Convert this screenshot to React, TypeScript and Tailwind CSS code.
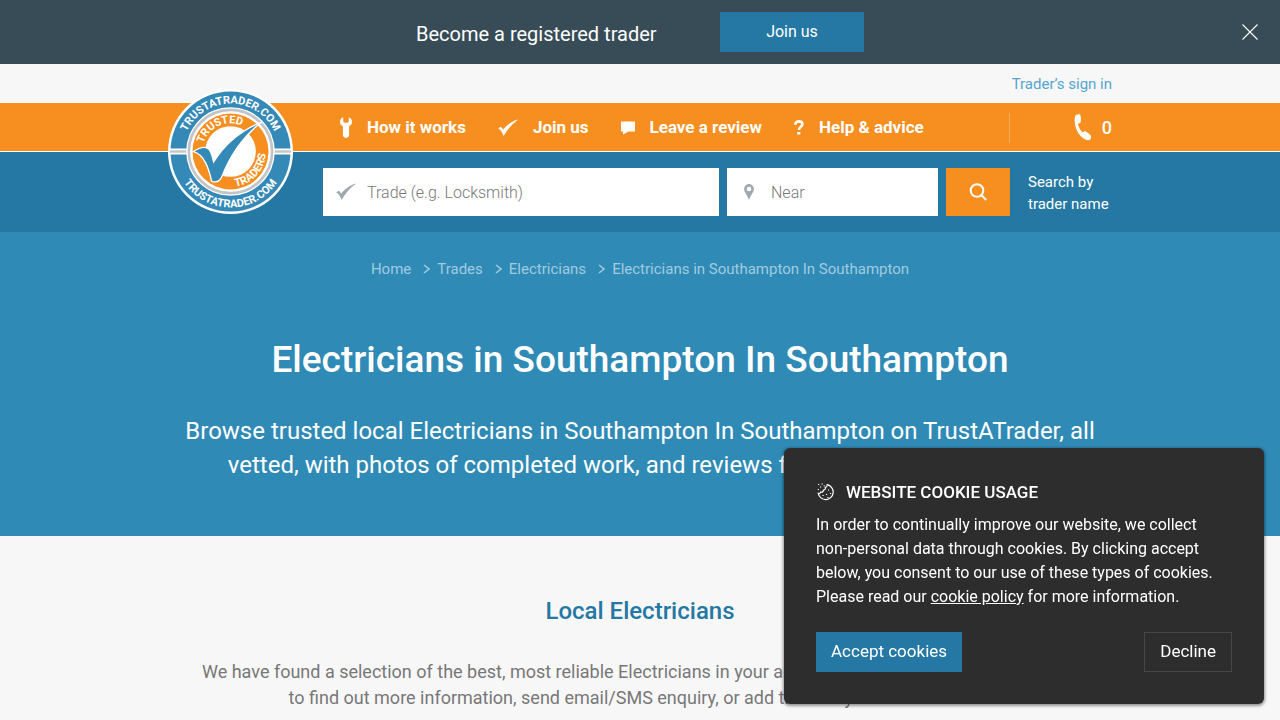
const NAV = [
  { label: "How it works", icon: <WrenchIcon /> },
  { label: "Join us", icon: <TickIcon className="w-5 h-5 mr-[15px]" /> },
  { label: "Leave a review", icon: <SpeechIcon /> },
  { label: "Help & advice", icon: <QuestionIcon /> },
];

const CRUMBS = ["Home", "Trades", "Electricians"];

function WrenchIcon() {
  return (
    <svg viewBox="0 0 12 21" className="w-3 h-[21px] mr-[15px]" fill="currentColor">
      <path d="M3.200.3C1.200 1.200 0 2.800 0 4.900c0 2 1.100 3.500 2.900 4.400v8.800c0 1.700 1.300 2.800 3.100 2.800s3.100-1.100 3.100-2.800V9.300C10.900 8.400 12 6.900 12 4.900 12 2.800 10.800 1.200 8.800.3v4.100L7.500 5.800h-3L3.200 4.400z" />
    </svg>
  );
}

function TickIcon({ className }: { className: string }) {
  return (
    <svg viewBox="0 0 20 20" className={className} fill="currentColor">
      <path d="M0 10.600l2.600-1.900c.7.300 1.600 1.200 2.500 2.700C8.800 7.200 13.700 3.500 19.500 1.600L19.700 2C14.500 5.700 9.400 11.200 5.600 18 4.300 15 2.500 11 0 10.600z" />
    </svg>
  );
}

function SpeechIcon() {
  return (
    <svg viewBox="0 0 14 14" className="w-[14px] h-[14px] mr-[15px]" fill="currentColor">
      <path d="M0 .5h14v10H7.500L2 13.500v-3H0z" />
    </svg>
  );
}

function QuestionIcon() {
  return (
    <svg
      viewBox="0 0 10 15"
      className="w-[10px] h-[15px] mr-[15px]"
      fill="none"
      stroke="currentColor"
      strokeWidth="2.600"
    >
      <path d="M1.300 4.700C1.300 2.500 2.700 1.400 4.900 1.400s3.500 1.100 3.500 2.800c0 2.600-3.500 2.800-3.500 5.900" />
      <path d="M3.300 13.300h3" />
    </svg>
  );
}

function PinIcon() {
  return (
    <svg viewBox="0 0 10 16" className="w-[10px] h-4" fill="#a0a9b0" fillRule="evenodd">
      <path d="M5 0a4.900 4.900 0 0 1 4.900 4.900C9.900 8.400 6.800 10.500 5 16 3.200 10.500.1 8.400.1 4.900A4.900 4.900 0 0 1 5 0zm0 2.700a2.300 2.300 0 1 0 0 4.600 2.300 2.300 0 0 0 0-4.600z" />
    </svg>
  );
}

function CookieIcon() {
  return (
    <svg viewBox="0 0 18 18" className="w-[18px] h-[18px]" fill="none" stroke="currentColor">
      <path
        d="M11.200 1.700a7.500 7.500 0 1 1-8.900 8.600c1 .3 2.200-.2 2.500-1.200 1.500.4 2.700-.6 2.600-1.900 1.600-.2 2.300-1.500 1.800-2.700 1.200-.4 2-1.600 2-2.800z"
        strokeWidth="1.200"
      />
      <path
        d="M2 1.500h1.200M5.500 1h1.200M4 4h1.200M1.800 6.500H3M7.700 2.800h1M11.900 7h1.200M14 10.500h1.200M10 11.500h1.200M6.500 12.500h1.200M11.300 14.500h1.200"
        strokeWidth="1.200"
      />
    </svg>
  );
}

function Chevron() {
  return (
    <svg viewBox="0 0 7 10" className="w-[7px] h-[10px] ml-3 mr-[7px]" fill="none" stroke="currentColor" strokeWidth="1.500">
      <path d="M1 1l5 4-5 4" />
    </svg>
  );
}

function Logo() {
  return (
    <svg viewBox="24 14 375 375" className="w-[125px] h-[125px]" role="img" aria-label="TrustATrader">
      <defs>
        <path id="ring-top" d="M67.500 201.500a144 144 0 0 1 288 0" />
        <path id="ring-bottom" d="M43.500 201.500a168 168 0 0 0 336 0" />
        <path id="inner-top" d="M127 206A84.600 84.600 0 0 1 269.200 139.600" />
        <path id="inner-bottom" d="M164.900 297.700A107 107 0 0 0 303.500 147.800" />
      </defs>
      <circle cx="211.500" cy="201.500" r="187.500" fill="#fff" />
      <circle cx="211.500" cy="201.500" r="180" fill="#3489b7" />
      <path d="M24 201.500h375" stroke="#fff" strokeWidth="18" />
      <path d="M30 201.500h363" stroke="#c4c7ca" strokeWidth="7" />
      <circle cx="211.500" cy="201.500" r="133" fill="#fff" />
      <circle cx="211.500" cy="201.500" r="125" fill="none" stroke="#c1c4c8" strokeWidth="8" />
      <circle cx="211.500" cy="201.500" r="114" fill="#f68e20" />
      <circle cx="211.500" cy="201.500" r="76" fill="#fff" />
      <g fill="#fff" className="font-[Roboto,sans-serif] font-bold" textAnchor="middle">
        <text fontSize="33">
          <textPath href="#ring-top" startOffset="50%">TRUSTATRADER.COM</textPath>
        </text>
        <text fontSize="33">
          <textPath href="#ring-bottom" startOffset="50%">TRUSTATRADER.COM</textPath>
        </text>
        <text fontSize="33">
          <textPath href="#inner-top" startOffset="50%">TRUSTED</textPath>
        </text>
        <text fontSize="33">
          <textPath href="#inner-bottom" startOffset="50%">TRADERS</textPath>
        </text>
      </g>
      <path
        d="M100 202c18-12 37-17 47-7 8 9 10 24 14 38 33-54 81-94 144-120-57 44-93 97-119 163-6 16-18 19-31 15-8-35-21-81-55-89z"
        fill="#3489b7"
        stroke="#fff"
        strokeWidth="4"
      />
    </svg>
  );
}

function JoinBar() {
  return (
    <div className="relative h-16 bg-[#374c57] flex items-center justify-center gap-[60px] text-white">
      <p className="w-[244px] text-xl pt-1 whitespace-nowrap">Become a registered trader</p>
      <button className="w-36 h-10 bg-[#2478a3] text-base">Join us</button>
      <button aria-label="Close" className="absolute right-[22px] top-6">
        <svg viewBox="0 0 16 16" className="w-4 h-4" stroke="currentColor" strokeWidth="1.100">
          <path d="M.5.500l15 15M15.500.500l-15 15" />
        </svg>
      </button>
    </div>
  );
}

function Header() {
  return (
    <header className="relative">
      <div className="h-[39px] bg-[#f7f7f7] border-b border-white">
        <div className="max-w-[944px] mx-auto h-full pt-0.5 flex items-center justify-end">
          <a href="#signin" className="text-[15px] text-[#56a5cf]">
            Trader’s sign in
          </a>
        </div>
      </div>
      <div className="h-[49px] bg-[#f68e20] border-b border-white text-white">
        <div className="max-w-[944px] mx-auto h-full pl-[172px] pt-px flex items-center">
          <nav className="flex items-center gap-8 font-bold text-[17px]">
            {NAV.map((item) => (
              <a key={item.label} href="#nav" className="flex items-center whitespace-nowrap">
                {item.icon}
                {item.label}
              </a>
            ))}
          </nav>
          <a
            href="#shortlist"
            aria-label="Shortlisted traders: 0"
            className="ml-auto w-[103px] h-[30px] border-l border-[#f9ab59] flex items-center justify-end gap-[10px] text-lg font-medium"
          >
            <svg viewBox="0 0 18 27" className="w-[18px] h-[27px]" fill="currentColor">
              <path d="M2.300.7C3.500.1 5.300 0 6.200.7c.7 1.600.9 4.900.5 7.300-.3 1-1.600 1.500-2.800 1.700.6 3.400 2.400 6.500 4.900 8.700.8-1 1.900-1.400 2.900-1 2.400 1.200 4.600 3 5.500 4.600.2 1.600-.6 3.400-1.900 4.100-2.200.7-6-1.300-8.500-3.800C3 18.200.7 12.700.6 6.500.6 3.900.8 1.600 2.300.7z" />
            </svg>
            <span>0</span>
          </a>
        </div>
      </div>
      <div className="h-20 bg-[#2478a3]">
        <form className="max-w-[944px] mx-auto h-full pl-[155px] flex items-center gap-2">
          <label className="flex-1 h-12 bg-white flex items-center pl-[13px] text-[#a0a9b0]">
            <TickIcon className="w-5 h-5" />
            <input
              aria-label="Trade"
              placeholder="Trade (e.g. Locksmith)"
              className="min-w-0 flex-1 h-full pl-[11px] font-light text-base text-gray-700 placeholder:text-[#777] outline-none"
            />
          </label>
          <label className="w-[211px] h-12 bg-white flex items-center pl-[17px]">
            <PinIcon />
            <input
              aria-label="Near"
              placeholder="Near"
              className="min-w-0 flex-1 h-full pl-[17px] font-light text-base text-gray-700 placeholder:text-[#777] outline-none"
            />
          </label>
          <button aria-label="Search" className="w-16 h-12 bg-[#f68e20] text-white flex items-center justify-center">
            <svg viewBox="0 0 18 18" className="w-[18px] h-[18px]" fill="none" stroke="currentColor" strokeWidth="2">
              <circle cx="8" cy="7.500" r="6.300" />
              <path d="M12.300 12l4.900 5" />
            </svg>
          </button>
          <a href="#name" className="w-[94px] pl-[10px] pt-0.5 text-[15px] leading-[22px] text-white whitespace-nowrap">
            Search by
            <br />
            trader name
          </a>
        </form>
      </div>
      <div className="absolute inset-x-0 top-[25px] pointer-events-none">
        <div className="max-w-[944px] mx-auto">
          <a href="#home" className="inline-block pointer-events-auto">
            <Logo />
          </a>
        </div>
      </div>
    </header>
  );
}

function CookieNotice() {
  return (
    <div className="fixed right-4 bottom-4 w-[480px] px-8 pt-8 pb-8 rounded-md bg-[#2d2d2d] text-white shadow-[0_1px_3px_1px_rgba(0,0,0,0.4)]">
      <h2 className="flex items-center gap-3 text-[17px] leading-6 font-medium uppercase mb-[9px]">
        <CookieIcon />
        Website cookie usage
      </h2>
      <p className="text-base leading-6 mb-[23px]">
        In order to continually improve our website, we collect
        <br />
        non-personal data through cookies. By clicking accept
        <br />
        below, you consent to our use of these types of cookies.
        <br />
        Please read our{" "}
        <a href="#policy" className="underline">
          cookie policy
        </a>{" "}
        for more information.
      </p>
      <div className="flex justify-between text-[17px]">
        <button className="h-10 px-[15px] bg-[#2478a3]">Accept cookies</button>
        <button className="h-10 px-[15px] border border-[#474747]">Decline</button>
      </div>
    </div>
  );
}

export default function App() {
  return (
    <div className="min-h-screen overflow-x-hidden bg-[#f7f7f7] font-[Roboto,sans-serif]">
      <JoinBar />
      <Header />
      <section className="bg-[#2f8ab5] text-white text-center pt-[25px] pb-[54px]">
        <nav className="flex items-center justify-center text-[15px] leading-6 text-[#a1cbe0]">
          {CRUMBS.map((crumb) => (
            <span key={crumb} className="flex items-center">
              <a href="#crumb">{crumb}</a>
              <Chevron />
            </span>
          ))}
          <span>Electricians in Southampton In Southampton</span>
        </nav>
        <h1 className="mt-[55px] text-[37px] leading-[48px] font-medium">
          Electricians in Southampton In Southampton
        </h1>
        <p className="max-w-[944px] mx-auto mt-[30px] text-2xl leading-[34px]">
          Browse trusted local Electricians in Southampton In Southampton on TrustATrader, all
          vetted, with photos of completed work, and reviews from previous customers.
        </p>
      </section>
      <section className="text-center pt-[59px] pb-4">
        <h2 className="text-2xl leading-8 font-medium text-[#2478a3]">Local Electricians</h2>
        <p className="max-w-[944px] mx-auto mt-8 text-lg leading-[26px] text-[#777]">
          We have found a selection of the best, most reliable Electricians in your area. Click on any of the traders below
          <br />
          to find out more information, send email/SMS enquiry, or add them to your shortlist now.
        </p>
      </section>
      <CookieNotice />
    </div>
  );
}
